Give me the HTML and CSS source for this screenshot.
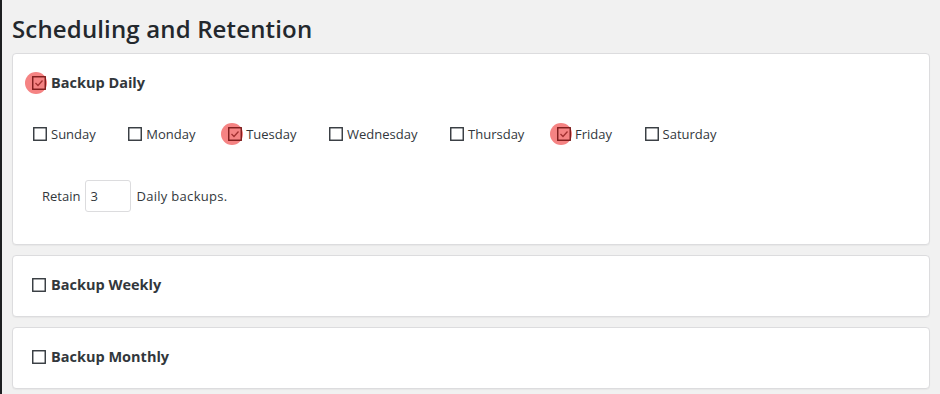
FILE: index.html
```html
<!DOCTYPE html>
<html>
<head>
    <meta charset="utf-8">
    <title>Scheduling and Retention</title>
    <link rel="stylesheet" href="styles.css">
</head>
<body>
    <div class="wrap">
        <h2 class="title">Scheduling and Retention</h2>

        <div class="card">
            <label class="head">
                <span class="box on">
                    <svg width="14" height="14" viewBox="0 0 14 14"><rect x="0.75" y="0.75" width="12.5" height="12.5"/><polyline points="3.5,7 6,9.5 10.5,4.5"/></svg>
                </span>
                Backup Daily
            </label>

            <div class="days">
                <label class="day"><span class="box"><svg width="14" height="14" viewBox="0 0 14 14"><rect x="0.75" y="0.75" width="12.5" height="12.5"/></svg></span>Sunday</label>
                <label class="day"><span class="box"><svg width="14" height="14" viewBox="0 0 14 14"><rect x="0.75" y="0.75" width="12.5" height="12.5"/></svg></span>Monday</label>
                <label class="day"><span class="box on"><svg width="14" height="14" viewBox="0 0 14 14"><rect x="0.75" y="0.75" width="12.5" height="12.5"/><polyline points="3.5,7 6,9.5 10.5,4.5"/></svg></span>Tuesday</label>
                <label class="day"><span class="box"><svg width="14" height="14" viewBox="0 0 14 14"><rect x="0.75" y="0.75" width="12.5" height="12.5"/></svg></span>Wednesday</label>
                <label class="day"><span class="box"><svg width="14" height="14" viewBox="0 0 14 14"><rect x="0.75" y="0.75" width="12.5" height="12.5"/></svg></span>Thursday</label>
                <label class="day"><span class="box on"><svg width="14" height="14" viewBox="0 0 14 14"><rect x="0.75" y="0.75" width="12.5" height="12.5"/><polyline points="3.5,7 6,9.5 10.5,4.5"/></svg></span>Friday</label>
                <label class="day"><span class="box"><svg width="14" height="14" viewBox="0 0 14 14"><rect x="0.75" y="0.75" width="12.5" height="12.5"/></svg></span>Saturday</label>
            </div>

            <div class="retain">
                <span>Retain</span>
                <input type="text" class="num" value="3">
                <span>Daily backups.</span>
            </div>
        </div>

        <div class="card">
            <label class="head">
                <span class="box"><svg width="14" height="14" viewBox="0 0 14 14"><rect x="0.75" y="0.75" width="12.5" height="12.5"/></svg></span>
                Backup Weekly
            </label>
        </div>

        <div class="card">
            <label class="head">
                <span class="box"><svg width="14" height="14" viewBox="0 0 14 14"><rect x="0.75" y="0.75" width="12.5" height="12.5"/></svg></span>
                Backup Monthly
            </label>
        </div>
    </div>
</body>
</html>
```

FILE: styles.css
```css
*{
    box-sizing: border-box;
}
body{
    margin: 0;
    min-height: 100vh;
    background-color: #f1f1f1;
    border-left: 2px solid #1d1f21;
    font-family: "Open Sans", "DejaVu Sans", sans-serif;
    color: #32373c;
}
.wrap{
    padding: 0 10px 0 10px;
}
.title{
    margin: 0;
    padding-top: 14px;
    margin-bottom: 9px;
    font-size: 24px;
    line-height: 30px;
    font-weight: 600;
    letter-spacing: 0.15px;
    color: #23282d;
}
.card{
    background-color: #fff;
    border: 1px solid #dcdcde;
    border-radius: 4px;
    box-shadow: 0 1px 1px rgba(0, 0, 0, 0.04);
    padding: 18px 19px 21px 19px;
    margin-bottom: 10px;
}
.head{
    display: flex;
    align-items: center;
    gap: 5px;
    height: 21px;
    font-size: 14.5px;
    font-weight: 700;
}
.box{
    position: relative;
    display: inline-flex;
    width: 14px;
    height: 14px;
}
.box svg{
    position: relative;
    display: block;
}
.box rect{
    fill: none;
    stroke: #32373c;
    stroke-width: 1.4;
}
.box.on::before{
    content: "";
    position: absolute;
    width: 22px;
    height: 22px;
    left: -7px;
    top: -4px;
    border-radius: 50%;
    background-color: #f58383;
}
.box.on rect{
    stroke: #7d1b1b;
}
.box.on polyline{
    fill: none;
    stroke: #a23030;
    stroke-width: 1.3;
}
.days{
    display: flex;
    align-items: center;
    margin-top: 30px;
    padding-left: 1px;
    height: 21px;
    font-size: 13px;
}
.day{
    display: flex;
    align-items: center;
    gap: 4px;
    margin-right: 32.6px;
}
.retain{
    display: flex;
    align-items: center;
    margin-top: 36px;
    margin-bottom: 11px;
    padding-left: 10px;
    font-size: 13px;
}
.num{
    width: 46px;
    height: 32px;
    margin: 0 5px 0 5px;
    padding: 0 4px;
    border: 1px solid #dcdcde;
    border-radius: 3px;
    font-family: "Open Sans", sans-serif;
    font-size: 13px;
    color: #32373c;
}
.retain span:last-child{
    letter-spacing: 0.3px;
}
```
